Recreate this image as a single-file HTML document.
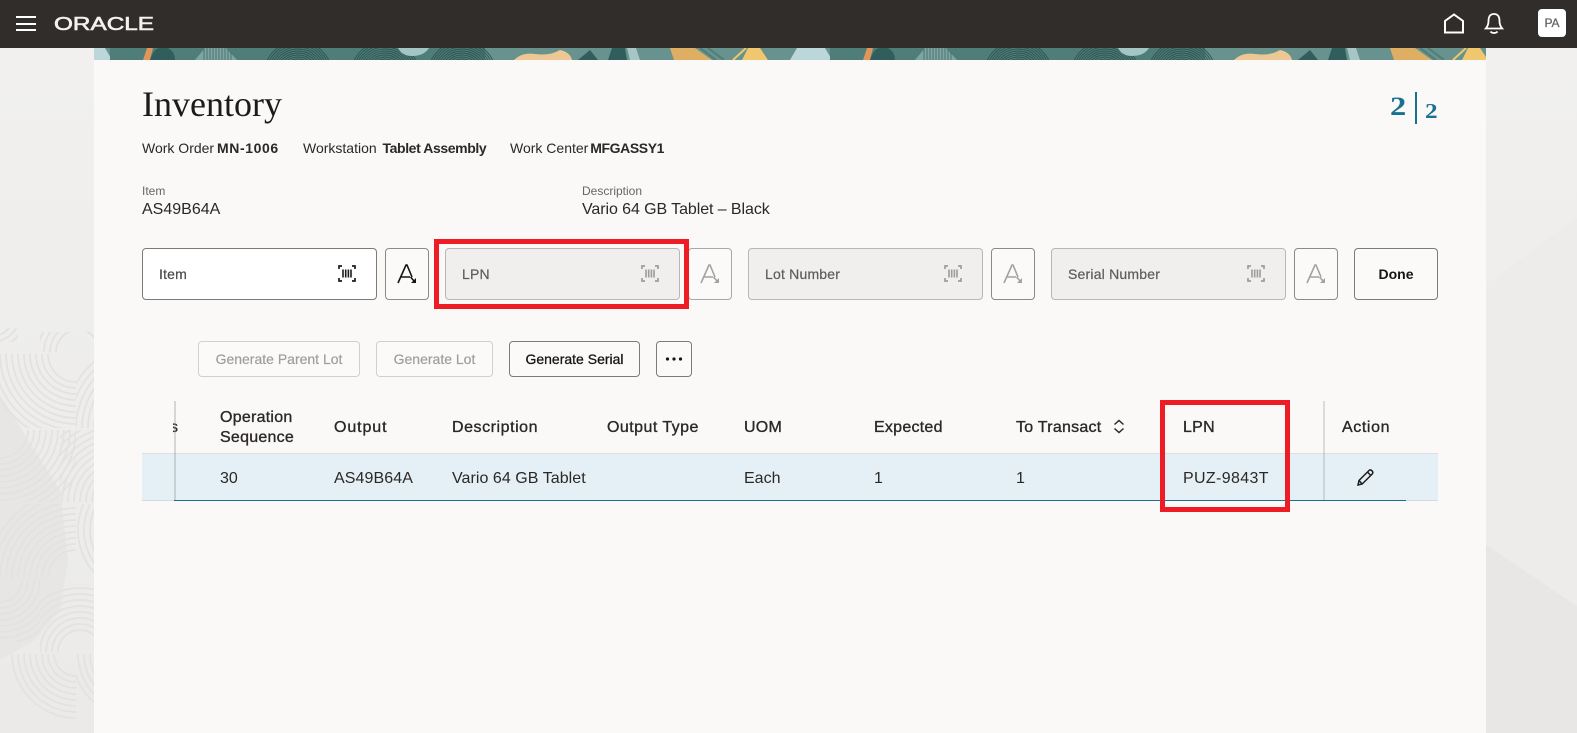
<!DOCTYPE html>
<html><head><meta charset="utf-8"><title>Inventory</title>
<style>
*{box-sizing:border-box}
html,body{margin:0;padding:0;width:1577px;height:733px;overflow:hidden;background:#f0efed;font-family:"Liberation Sans",sans-serif;color:#2b2826}
.a{position:absolute;white-space:nowrap}
.t14{font-size:14px;line-height:18px}
.t16{font-size:16px;line-height:20px}
.b{font-weight:bold}
.field{position:absolute;top:248px;width:235px;height:52px;border:1px solid #b9b7b4;border-radius:4px;background:#f1efed;font-size:14px;line-height:51px;padding-left:16px;color:#5d5b59;-webkit-text-stroke:.2px #5d5b59;letter-spacing:.2px}
.field.on{background:#fff;border-color:#7d7a77;color:#4a4846;-webkit-text-stroke:.2px #4a4846}
.ab{position:absolute;top:248px;width:44px;height:52px;border:1px solid #8c8986;border-radius:4px;background:#fbfaf8}
.btn{position:absolute;top:341px;height:36px;border:1px solid #d2d0cd;border-radius:4px;font-size:14px;line-height:34px;text-align:center;color:#a09e9b;-webkit-text-stroke:.2px #a09e9b;background:#fbfaf8}
.btn.on{border-color:#7d7a77;color:#161513;-webkit-text-stroke:.3px #161513}
.h{position:absolute;top:418px;font-size:16px;line-height:20px;color:#2b2826;-webkit-text-stroke:.35px #2b2826;letter-spacing:.25px;white-space:nowrap}
.c{position:absolute;top:469px;font-size:16px;line-height:20px;color:#2b2826;white-space:nowrap}
.red{position:absolute;border:5px solid #ee1c25}
svg{position:absolute;overflow:hidden}
</style></head><body>

<svg style="left:0;top:48px" width="1577" height="685" viewBox="0 48 1577 685">
<defs>
<linearGradient id="g" x1="0" y1="0" x2="0" y2="1"><stop offset="0" stop-color="#f1f0ee"/><stop offset="1" stop-color="#ebeae8"/></linearGradient>
<g id="cc" fill="none" stroke="#e3e2e0" stroke-width="1.8">
<circle r="28"/><circle r="34"/><circle r="40"/><circle r="46"/><circle r="52"/><circle r="58"/><circle r="64"/><circle r="70"/><circle r="76"/><circle r="82"/><circle r="88"/>
</g>
<g id="cc2" fill="none" stroke="#e3e2e0" stroke-width="1.8">
<circle r="22"/><circle r="28"/><circle r="34"/><circle r="40"/><circle r="46"/><circle r="52"/><circle r="58"/><circle r="64"/>
</g>
</defs>
<rect x="0" y="48" width="1577" height="685" fill="url(#g)"/>
<polygon points="1486,285 1577,217 1577,733 1486,733" fill="#edecea"/>
<polygon points="1486,545 1577,606 1577,733 1486,733" fill="#e8e7e5"/>
<polygon points="0,395 28,440 60,490 68,560 60,610 35,640 0,660" fill="#e7e6e4"/>
<svg x="0" y="328" width="18" height="14"><use href="#cc2" x="-8" y="-14"/></svg>
<svg x="40" y="332" width="54" height="20"><use href="#cc2" x="38" y="20"/></svg>
<svg x="0" y="354" width="76" height="74"><use href="#cc" x="76" y="0"/></svg>
<svg x="76" y="354" width="18" height="74"><use href="#cc" x="76" y="74"/></svg>
<svg x="0" y="430" width="76" height="72"><use href="#cc" x="0" y="0"/></svg>
<svg x="60" y="430" width="34" height="72"><use href="#cc" x="60" y="72"/></svg>
<svg x="0" y="504" width="76" height="74"><use href="#cc" x="76" y="74"/></svg>
<svg x="76" y="504" width="18" height="74"><use href="#cc2" x="66" y="26"/></svg>
<svg x="0" y="580" width="40" height="62"><use href="#cc2" x="0" y="0"/></svg>
<svg x="40" y="580" width="54" height="72"><use href="#cc2" x="40" y="72"/></svg>
<svg x="0" y="654" width="76" height="66"><use href="#cc2" x="76" y="0"/></svg>
<svg x="76" y="654" width="18" height="66"><use href="#cc2" x="60" y="0"/></svg>
</svg>

<div class="a" style="left:94px;top:48px;width:1392px;height:685px;background:#fbf9f8"></div>

<svg style="left:94px;top:48px" width="1392" height="12" viewBox="94 48 1392 12">
<defs>
<g id="fp" fill="none" stroke="#2d5553" stroke-width=".9">
<circle r="16"/><circle r="18"/><circle r="20"/><circle r="22"/><circle r="24"/><circle r="26"/><circle r="28"/><circle r="30"/><circle r="32"/><circle r="34"/>
</g>
<g id="p">
<rect x="110" y="48" width="375" height="12" fill="#4f7d78"/>
<rect x="485" y="48" width="345" height="12" fill="#67928e"/>
<path d="M797 48H825L832 60H790Z" fill="#bcd7d9"/>
<path d="M143 60L147 48H153L150 60Z" fill="#e0955a"/>
<path d="M150 60Q154 48 160 48H168Q175 52 175 60Z" fill="#2f5e5c"/>
<path d="M195 60L205 48H226L237 60Z" fill="#7fa5a2"/>
<path d="M204 49V60M207 48V60M210 48V60M213 48V60M216 48V60M219 48V60M222 48V60M225 48V60M228 50V60M231 52V60" stroke="#3f6865" stroke-width=".8" fill="none"/>
<use href="#fp" x="298" y="75"/>
<use href="#fp" x="385" y="75"/>
<use href="#fp" x="462" y="75"/>
<path d="M398 48H429Q424 56 412 56Q402 56 398 48Z" fill="#a3c5c4"/>
<path d="M514 60Q522 52 535 54Q550 56 560 50Q570 52 572 60Z" fill="#edc894"/>
<path d="M578 60L590 50L598 60Z" fill="#2f5e5c"/>
<path d="M608 60L612 48H625L627 60Z" fill="#2f5e5c"/>
<path d="M627 48H636L640 60H630Z" fill="#a6c6c4"/>
<path d="M670 48H695L712 60H674Z" fill="#deae63"/>
<path d="M700 48L716 60M708 48L724 60" stroke="#4f7d78" stroke-width="2" fill="none"/>
<path d="M733 60L746 48" stroke="#f0c66e" stroke-width="2" fill="none"/>
<path d="M748 48H760L768 60H742Z" fill="#f0c66e"/>
</g>
</defs>
<rect x="94" y="48" width="1392" height="12" fill="#4f7d78"/>
<use href="#p" x="-720"/><use href="#p"/><use href="#p" x="720"/>
</svg>

<div class="a" style="left:0;top:0;width:1577px;height:48px;background:#312d2a"></div>
<div class="a" style="left:16px;top:16px;width:20px;height:2px;background:#fff"></div>
<div class="a" style="left:16px;top:23px;width:20px;height:2px;background:#fff"></div>
<div class="a" style="left:16px;top:29px;width:20px;height:2px;background:#fff"></div>
<svg style="left:54px;top:12px" width="102" height="24"><text x="0" y="18" font-family="Liberation Sans" font-size="18.5" fill="#f3f2f0" stroke="#f3f2f0" stroke-width=".6" textLength="100" lengthAdjust="spacingAndGlyphs">ORACLE</text></svg>

<svg style="left:1442px;top:11px" width="24" height="24" fill="none" stroke="#fff" stroke-width="2"><path d="M3 21.5V10L12 3.5L21 10V21.5Z"/></svg>
<svg style="left:1483px;top:11px" width="22" height="24" fill="none" stroke="#fff" stroke-width="1.8"><path d="M11 3C6.5 3 5.5 6.5 5.5 10C5.5 13.5 4.5 15.5 2.8 17.5H19.2C17.5 15.5 16.5 13.5 16.5 10C16.5 6.5 15.5 3 11 3Z"/><path d="M7.5 20.5C9 22.5 13 22.5 14.5 20.5"/></svg>
<div class="a" style="left:1538px;top:9px;width:28px;height:28px;background:#fff;border-radius:4px;text-align:center;font-size:12px;line-height:28px;color:#666"><span style="-webkit-text-stroke:.3px #666">PA</span></div>

<div class="a" style="left:142px;top:84px;font-family:'Liberation Serif',serif;font-size:36px;line-height:41px;color:#1d1b19">Inventory</div>
<div class="a t14" style="left:142px;top:139px">Work Order <span class="b" style="margin-left:-1px;letter-spacing:.6px">MN-1006</span></div>
<div class="a t14" style="left:303px;top:139px">Workstation <span class="b" style="margin-left:2px;letter-spacing:-.4px">Tablet Assembly</span></div>
<div class="a t14" style="left:510px;top:139px">Work Center <span class="b" style="margin-left:-2px;letter-spacing:-.4px">MFGASSY1</span></div>
<div class="a" style="left:142px;top:184px;font-size:12px;line-height:15px;color:#666">Item</div>
<div class="a t16" style="left:142px;top:200px">AS49B64A</div>
<div class="a" style="left:582px;top:184px;font-size:12px;line-height:15px;color:#666">Description</div>
<div class="a t16" style="left:582px;top:200px;letter-spacing:-.08px">Vario 64 GB Tablet – Black</div>

<div class="a" style="left:1390px;top:92px;font-family:'Liberation Serif',serif;font-weight:bold;font-size:26px;line-height:30px;color:#17718f;transform:scaleX(1.25);transform-origin:left">2</div>
<div class="a" style="left:1415px;top:92px;width:2px;height:32px;background:#17718f"></div>
<div class="a" style="left:1425px;top:98px;font-family:'Liberation Serif',serif;font-weight:bold;font-size:21px;line-height:26px;color:#17718f;transform:scaleX(1.2);transform-origin:left">2</div>

<svg width="0" height="0" style="position:absolute"><defs>
<g id="bc"><path d="M1 4V1H4M14 1H17V4M17 13V16H14M4 16H1V13" fill="none" stroke-width="1.7"/><path d="M5 4.5V12.5M7.7 4.5V12.5M10.4 4.5V12.5M13 4.5V12.5" fill="none" stroke-width="1.6"/></g>
<g id="aa"><path d="M1 20L9 2H10L15 14" fill="none" stroke-width="1.6"/><path d="M4 14H13" fill="none" stroke-width="1.5"/><path d="M13.5 14L17.5 18.5" fill="none" stroke-width="1.6"/><path d="M19 15V20H14Z" stroke="none"/></g>
</defs></svg>

<div class="field on" style="left:142px">Item</div>
<svg style="left:338px;top:265px" width="18" height="18" stroke="#1f1d1b"><use href="#bc"/></svg>
<div class="ab" style="left:385px"></div>
<svg style="left:397px;top:263px" width="21" height="22" stroke="#161513" fill="#161513"><use href="#aa"/></svg>

<div class="field" style="left:445px">LPN</div>
<svg style="left:641px;top:265px" width="18" height="18" stroke="#9e9c99"><use href="#bc"/></svg>
<div class="ab" style="left:688px;border-color:#a9a7a4"></div>
<svg style="left:700px;top:263px" width="21" height="22" stroke="#a4a29f" fill="#a4a29f"><use href="#aa"/></svg>

<div class="field" style="left:748px">Lot Number</div>
<svg style="left:944px;top:265px" width="18" height="18" stroke="#9e9c99"><use href="#bc"/></svg>
<div class="ab" style="left:991px"></div>
<svg style="left:1003px;top:263px" width="21" height="22" stroke="#a4a29f" fill="#a4a29f"><use href="#aa"/></svg>

<div class="field" style="left:1051px">Serial Number</div>
<svg style="left:1247px;top:265px" width="18" height="18" stroke="#9e9c99"><use href="#bc"/></svg>
<div class="ab" style="left:1294px"></div>
<svg style="left:1306px;top:263px" width="21" height="22" stroke="#a4a29f" fill="#a4a29f"><use href="#aa"/></svg>

<div class="ab" style="left:1354px;width:84px;border-color:#7d7a77;text-align:center;font-size:14px;line-height:51px;font-weight:bold;color:#161513">Done</div>

<div class="red" style="left:434px;top:239px;width:255px;height:70px"></div>

<div class="btn" style="left:198px;width:162px">Generate Parent Lot</div>
<div class="btn" style="left:376px;width:117px">Generate Lot</div>
<div class="btn on" style="left:509px;width:131px">Generate Serial</div>
<div class="btn on" style="left:656px;width:36px"></div>
<svg style="left:664px;top:355px" width="20" height="8" fill="#161513"><circle cx="3.5" cy="4" r="1.6"/><circle cx="10" cy="4" r="1.6"/><circle cx="16.5" cy="4" r="1.6"/></svg>

<div class="a" style="left:142px;top:453px;width:1296px;height:47px;background:#e4f0f6"></div>
<div class="a" style="left:142px;top:453px;width:1296px;height:1px;background:#dfdedb"></div>
<div class="a" style="left:142px;top:500px;width:1296px;height:1px;background:#cfdde3"></div>
<div class="a" style="left:174px;top:500px;width:1232px;height:1px;background:#17718f"></div>

<div class="a" style="left:173px;top:418px;width:6px;height:20px;overflow:hidden;font-size:16px;line-height:20px;-webkit-text-stroke:.35px #2b2826"><span style="position:absolute;left:-3px">s</span></div>
<div class="a" style="left:174px;top:401px;width:2px;height:99px;background:rgba(150,150,150,.35)"></div>
<div class="a" style="left:1323px;top:401px;width:2px;height:99px;background:rgba(150,150,150,.3)"></div>

<div class="h" style="left:220px;top:408px">Operation<br>Sequence</div>
<div class="h" style="left:334px;letter-spacing:.9px">Output</div>
<div class="h" style="left:452px;letter-spacing:.55px">Description</div>
<div class="h" style="left:607px;letter-spacing:.45px">Output Type</div>
<div class="h" style="left:744px">UOM</div>
<div class="h" style="left:874px">Expected</div>
<div class="h" style="left:1016px">To Transact</div>
<svg style="left:1112px;top:419px" width="14" height="15" fill="none" stroke="#2b2826" stroke-width="1.5"><path d="M2.5 5.5L7 1.5L11.5 5.5M2.5 9.5L7 13.5L11.5 9.5"/></svg>
<div class="h" style="left:1183px">LPN</div>
<div class="h" style="left:1342px;letter-spacing:.6px">Action</div>

<div class="c" style="left:220px">30</div>
<div class="c" style="left:334px;letter-spacing:.1px">AS49B64A</div>
<div class="c" style="left:452px;letter-spacing:.05px">Vario 64 GB Tablet</div>
<div class="c" style="left:744px">Each</div>
<div class="c" style="left:874px">1</div>
<div class="c" style="left:1016px">1</div>
<div class="c" style="left:1183px;letter-spacing:.35px">PUZ-9843T</div>
<svg style="left:1356px;top:468px" width="19" height="19" fill="none" stroke="#1f1d1b" stroke-width="1.5"><path d="M2 17L3 12.5L13 2.5Q14.5 1.2 16 2.8Q17.5 4.5 16.2 6L6.2 16Z"/><path d="M11.5 4L14.8 7.5M3 12.5L6.2 16"/></svg>

<div class="red" style="left:1160px;top:400px;width:130px;height:112px"></div>
</body></html>
